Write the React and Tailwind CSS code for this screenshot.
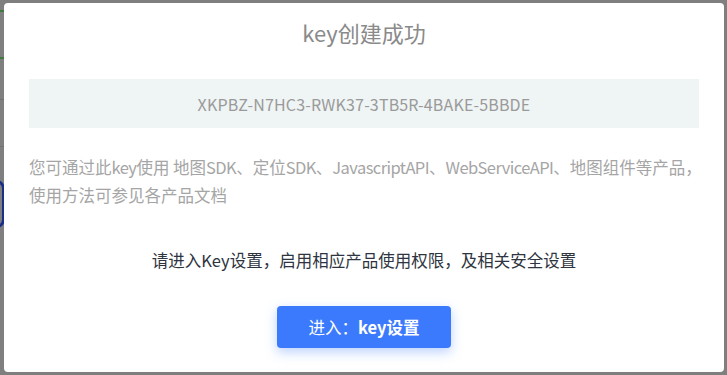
import React from "react";

const font = { fontFamily: '"Noto Sans CJK SC", "Noto Sans", sans-serif' };

// Latin runs inside Chinese text render a little narrower in the reference
function Latin({ children }) {
  return <span className="tracking-[-0.035em]">{children}</span>;
}

export default function App() {
  return (
    <div className="relative w-[727px] h-[375px] bg-[#7f7f7f] overflow-hidden pl-[4px] pt-[3px]" style={font}>
      {/* page behind the overlay, only its left edge shows */}
      <div className="absolute left-0 top-[10px] w-[6px] h-[2px] bg-[#3f7a3f]" />
      <div className="absolute left-0 top-[57px] w-[6px] h-[2px] bg-[#3f7a3f]" />
      <div className="absolute left-0 top-[99px] w-[6px] h-px bg-[#727272]" />
      <div className="absolute left-0 top-[146px] w-[6px] h-px bg-[#727272]" />
      <div className="absolute left-[-12px] top-[180px] w-[17px] h-[48px] rounded-full border-[3px] border-[#1b2f86]" />

      {/* dialog */}
      <div className="relative w-[720px] h-[369px] bg-white rounded-[4px] flex flex-col items-center px-[25px] pt-[13px]">
        <h2 className="text-[22px] leading-[32px] text-[#8a8a8a]">key创建成功</h2>

        <div className="mt-[31px] w-full h-[49px] bg-[#eff4f4] flex items-center justify-center text-[16px] text-[#9a9a9a] tracking-[0.01em]">
          XKPBZ-N7HC3-RWK37-3TB5R-4BAKE-5BBDE
        </div>

        <p className="mt-[25px] w-full text-[16.5px] leading-[28px] text-[#a5a5a5] whitespace-nowrap">
          您可通过此<Latin>key</Latin>使用 地图<Latin>SDK</Latin>、定位<Latin>SDK</Latin>、<Latin>JavascriptAPI</Latin>、<Latin>WebServiceAPI</Latin>、地图组件等产品，
          <br />
          使用方法可参见各产品文档
        </p>

        <p className="mt-[39px] text-[16.5px] leading-[24px] text-[#2e3440]">
          请进入Key设置，启用相应产品使用权限，及相关安全设置
        </p>

        <button className="mt-[34px] w-[174px] h-[42px] rounded-[4px] bg-[#3c7afd] text-white text-[16.5px] shadow-[0_4px_12px_rgba(60,122,253,0.35)]">
          进入：<span className="font-bold">key设置</span>
        </button>
      </div>
    </div>
  );
}
